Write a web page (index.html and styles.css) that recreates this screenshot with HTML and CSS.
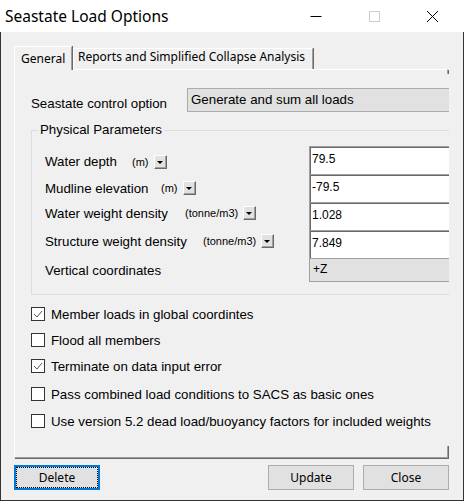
FILE: index.html
```html
<!DOCTYPE html>
<html>
<head>
<meta charset="utf-8">
<title>Seastate Load Options</title>
<link rel="stylesheet" href="styles.css">
</head>
<body>
<div class="window">
  <div class="titlebar">
    <span class="title">Seastate Load Options</span>
    <div class="caption">
      <span class="cap-btn"><svg width="12" height="12" viewBox="0 0 12 12"><path d="M0.5 6.5h11" stroke="#000" fill="none"/></svg></span>
      <span class="cap-btn"><svg width="12" height="12" viewBox="0 0 12 12"><rect x="1.5" y="1.5" width="10" height="10" stroke="#cccccc" fill="none"/></svg></span>
      <span class="cap-btn"><svg width="12" height="12" viewBox="0 0 12 12"><path d="M1 1L12 12M12 1L1 12" stroke="#000" fill="none"/></svg></span>
    </div>
  </div>
  <div class="client">
    <div class="tabs">
      <div class="tab active">General</div>
      <div class="tab other">Reports and Simplified Collapse Analysis</div>
    </div>
    <div class="panel">
      <div class="page">
        <div class="control-row">
          <span class="ctl-label">Seastate control option</span>
          <div class="combo">Generate and sum all loads</div>
        </div>
        <div class="group">
          <span class="legend">Physical Parameters</span>
          <div class="param-grid">
            <div class="param-label lower"><span class="name depth">Water depth</span><span class="unit">(m)</span><span class="drop"></span></div>
            <div class="field">79.5</div>
            <div class="param-label"><span class="name mudline">Mudline elevation</span><span class="unit">(m)</span><span class="drop"></span></div>
            <div class="field">-79.5</div>
            <div class="param-label upper"><span class="name water">Water weight density</span><span class="unit">(tonne/m3)</span><span class="drop"></span></div>
            <div class="field">1.028</div>
            <div class="param-label upper"><span class="name structure">Structure weight density</span><span class="unit">(tonne/m3)</span><span class="drop"></span></div>
            <div class="field">7.849</div>
            <div class="param-label"><span class="name">Vertical coordinates</span></div>
            <div class="field ro">+Z</div>
          </div>
        </div>
        <div class="checks">
          <label class="check"><span class="box"><svg width="10" height="10" viewBox="0 0 10 10"><path d="M1 5l3 3 5-6" stroke="#555" fill="none"/></svg></span>Member loads in global coordintes</label>
          <label class="check"><span class="box"></span>Flood all members</label>
          <label class="check"><span class="box"><svg width="10" height="10" viewBox="0 0 10 10"><path d="M1 5l3 3 5-6" stroke="#555" fill="none"/></svg></span>Terminate on data input error</label>
          <label class="check sp2"><span class="box"></span>Pass combined load conditions to SACS as basic ones</label>
          <label class="check sp1"><span class="box"></span>Use version 5.2 dead load/buoyancy factors for included weights</label>
        </div>
      </div>
    </div>
    <div class="actions">
      <button class="btn focused">Delete</button>
      <button class="btn push-right">Update</button>
      <button class="btn">Close</button>
    </div>
  </div>
</div>
</body>
</html>
```
FILE: styles.css
```css
* { box-sizing: border-box; }
body {
  margin: 0;
  width: 464px;
  height: 501px;
  overflow: hidden;
  background: #fff;
  font-family: "Liberation Sans", Arial, sans-serif;
  font-size: 13.3px;
  color: #000;
}
.window {
  display: flex;
  flex-direction: column;
  height: 501px;
}
.titlebar {
  height: 32px;
  flex: none;
  display: flex;
  align-items: center;
  background: #fff;
}
.title {
  flex: 1;
  padding-left: 5px;
  font-family: "Noto Sans", sans-serif;
  font-size: 15.5px;
  line-height: 20px;
}
.caption {
  display: flex;
  align-self: stretch;
  margin-right: 3px;
}
.cap-btn {
  width: 58px;
  display: flex;
  align-items: center;
  justify-content: center;
}
.client {
  flex: 1;
  background: #f0f0f0;
  border: 1px solid #333;
  border-top: 0;
  padding: 0 14px 0 13px;
}
.tabs {
  display: flex;
  align-items: flex-end;
  height: 37px;
}
.tab {
  font-family: "Noto Sans", sans-serif;
  font-size: 12px;
  line-height: 14px;
  background: #f0f0f0;
  border-top: 1px solid #fff;
  border-left: 1px solid #fff;
  border-right: 1px solid #a0a0a0;
  box-shadow: 1px 0 0 #696969;
  white-space: nowrap;
}
.tab.active {
  position: relative;
  z-index: 1;
  width: 58px;
  height: 24px;
  margin-bottom: -1px;
  padding: 5px 0 0 6px;
}
.tab.other {
  width: 240px;
  height: 21px;
  margin-left: 1px;
  padding: 1px 0 0 4px;
}
.panel {
  width: 434px;
  height: 389px;
  border-top: 1px solid #fff;
  border-left: 1px solid #fff;
  border-right: 1px solid #a0a0a0;
  border-bottom: 1px solid #a0a0a0;
  box-shadow: 1px 1px 0 #696969;
  padding-top: 4px;
}
.page {
  margin-right: -2px;
  height: 372px;
  overflow: hidden;
  padding: 14px 0 0 16px;
  background: #f0f0f0;
}
.control-row {
  display: flex;
  align-items: center;
  height: 24px;
}
.ctl-label {
  width: 156px;
  flex: none;
  padding-top: 6px;
}
.combo {
  flex: none;
  width: 290px;
  height: 24px;
  border: 1px solid #adadad;
  background: #e1e1e1;
  padding-left: 3px;
  line-height: 22px;
}
.group {
  position: relative;
  margin-top: 18px;
  width: 460px;
  border: 1px solid #dcdcdc;
  padding: 15px 0 12px 13px;
}
.legend {
  position: absolute;
  left: 6px;
  top: -9px;
  padding: 0 2px;
  line-height: 16px;
  background: #f0f0f0;
}
.param-grid {
  display: grid;
  grid-template-columns: 264px 160px;
  grid-template-rows: 28px 28px 28px 28px 24px;
}
.param-label {
  display: flex;
  align-items: center;
  white-space: nowrap;
}
.param-label.lower { padding-top: 3px; }
.param-label.upper { padding-bottom: 6px; }
.name.depth { width: 87px; }
.name.mudline { width: 116px; }
.name.water { width: 140px; }
.name.structure { width: 158px; }
.unit {
  font-size: 11px;
  margin-right: 5px;
}
.drop {
  position: relative;
  width: 13px;
  height: 14px;
  background: #e1e1e1;
  border-top: 1px solid #fff;
  border-left: 1px solid #fff;
  border-right: 1px solid #696969;
  border-bottom: 1px solid #696969;
  box-shadow: inset -1px -1px 0 #a0a0a0;
  display: flex;
  align-items: center;
  justify-content: center;
}
.drop::after {
  content: "";
  border-top: 3px solid #000;
  border-left: 3px solid transparent;
  border-right: 3px solid transparent;
  margin: 1px 1px 0 0;
}
.field {
  background: #fff;
  border-top: 1px solid #a0a0a0;
  border-left: 1px solid #a0a0a0;
  box-shadow: inset 1px 1px 0 #696969;
  font-size: 12px;
  line-height: 14px;
  padding: 5px 0 0 2px;
}
.field.ro {
  background: #e1e1e1;
  border: 1px solid #a0a0a0;
  box-shadow: none;
  padding: 3px 0 0 3px;
}
.checks {
  margin-top: 6px;
}
.check {
  display: flex;
  align-items: center;
  height: 26px;
  white-space: nowrap;
}
.check.sp2 { margin-top: 2px; }
.check.sp1 { margin-top: 1px; }
.box {
  flex: none;
  width: 14px;
  height: 14px;
  border: 1px solid #333;
  background: #fff;
  margin-right: 6px;
  display: flex;
  align-items: center;
  justify-content: center;
}
.actions {
  display: flex;
  margin-top: 7px;
}
.btn {
  width: 86px;
  height: 25px;
  border: 1px solid #adadad;
  background: #e1e1e1;
  font-family: "Noto Sans", sans-serif;
  font-size: 12px;
  color: #000;
  padding: 0;
}
.btn.focused {
  border: 2px solid #0078d7;
  outline: 1px dotted #000;
  outline-offset: -3px;
}
.btn.push-right { margin-left: auto; margin-right: 9px; }
```
